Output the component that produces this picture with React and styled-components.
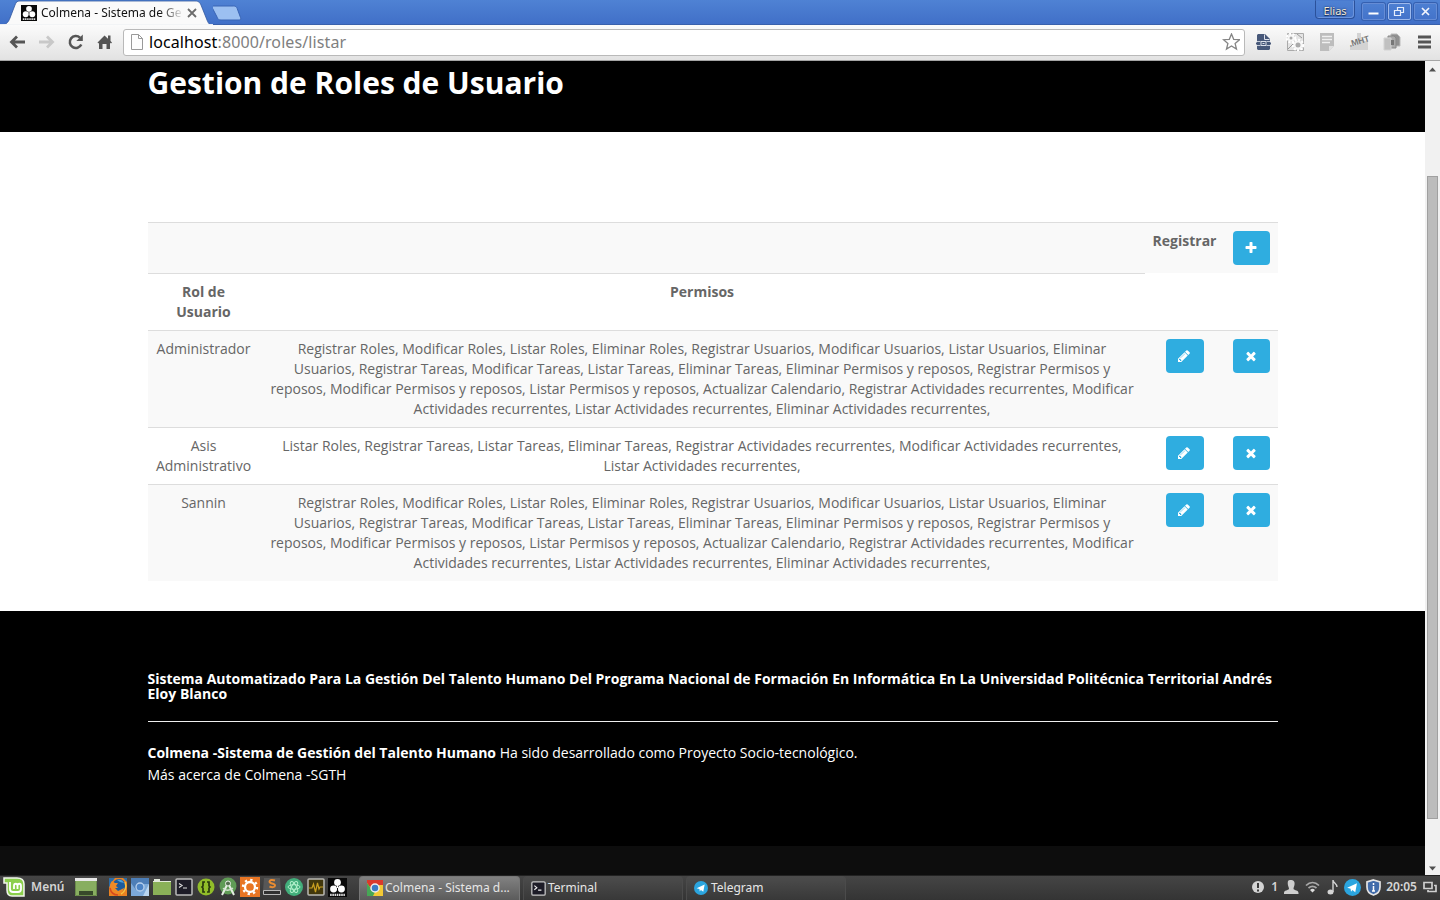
import React from "react";
import styled, { createGlobalStyle, css } from "styled-components";

const GlobalStyle = createGlobalStyle`
  * { box-sizing: border-box; }
  html, body { margin: 0; padding: 0; overflow: hidden; background: #fff; }
  svg { display: block; flex: none; }
`;

const Desktop = styled.div`
  width: 1440px;
  height: 900px;
  display: flex;
  flex-direction: column;
  overflow: hidden;
  font-family: "Noto Sans", sans-serif;
`;

/* ---------- browser frame ---------- */
const TabStrip = styled.div`
  height: 25px;
  flex: none;
  display: flex;
  background: linear-gradient(#4f82d4, #4170c8 94%, #35599d);
`;
const Tab = styled.div`
  width: 213px;
  height: 25px;
  display: flex;
  position: relative;
  padding: 5px 0 0 21px;
`;
const TabShape = styled.svg`
  position: absolute;
  left: 0;
  top: 0;
`;
const TabTitle = styled.span`
  position: relative;
  width: 141px;
  margin-left: 4px;
  font-size: 12px;
  line-height: 16px;
  white-space: nowrap;
  color: #111;
  mask-image: linear-gradient(90deg, #000 119px, transparent 143px);
`;
const Lift = styled.span`
  position: relative;
  display: block;
`;
const WindowControls = styled.div`
  margin-left: auto;
  display: flex;
  padding-right: 3px;
`;
const Profile = styled.div`
  width: 40px;
  height: 19px;
  margin-right: 4px;
  border: 1px solid #2b519b;
  border-top-color: #4a7bd0;
  border-radius: 0 0 4px 4px;
  box-shadow: inset -1px -1px 0 #6c94dc;
  color: #f3ead8;
  text-shadow: 0 0 2px #14274e, 0 1px 1px #14274e;
  font-size: 11px;
  line-height: 19px;
  text-align: center;
`;
const WinButton = styled.div`
  width: 23px;
  height: 17px;
  margin: 3px 0 0 3px;
  border: 1px solid ${(p) => (p.$bright ? "#9db9ec" : "#658cd5")};
  border-radius: 2px;
  box-shadow: 0 0 0 1px #3560b0;
  display: flex;
  align-items: center;
  justify-content: center;
`;
const Toolbar = styled.div`
  height: 36px;
  flex: none;
  display: flex;
  align-items: center;
  background: linear-gradient(#fbfbfb, #e2e2e2);
  border-bottom: 1px solid #a5a5a5;
  padding: 0 6px 1px 8px;
`;
const NavIcons = styled.div`
  display: flex;
  gap: 9px;
  width: 115px;
`;
const Address = styled.div`
  width: 1122px;
  height: 27px;
  display: flex;
  align-items: center;
  background: #fff;
  border: 1px solid #b9b9b9;
  border-radius: 3px;
  padding: 0 4px 0 6px;
`;
const Url = styled.span`
  flex: 1;
  margin-left: 4px;
  font-size: 16px;
  letter-spacing: 0.1px;
  line-height: 22px;
  color: #808080;
  b { font-weight: 400; color: #000; }
`;
const Extensions = styled.div`
  display: flex;
  align-items: center;
  gap: 12.3px;
  margin-left: auto;
`;

/* ---------- web page ---------- */
const Viewport = styled.div`
  height: 814px;
  flex: none;
  display: flex;
`;
const Page = styled.div`
  width: 1425px;
  font-family: "Open Sans", sans-serif;
  font-size: 14px;
  line-height: 20px;
  color: #666;
  background: #fff;
`;
const Banner = styled.header`
  height: 71px;
  background: #000;
  padding: 5px 147.5px 0;
`;
const Title = styled.h1`
  margin: 0;
  font-size: 30px;
  line-height: 33px;
  font-weight: 700;
  color: #fff;
`;
const Content = styled.main`
  padding: 90px 147.5px 30px;
`;
const Table = styled.table`
  width: 1130px;
  table-layout: fixed;
  border-collapse: collapse;
  border-spacing: 0;
`;
const Row = styled.tr`
  background: ${(p) => (p.$striped ? "#f9f9f9" : "#fff")};
`;
const cell = css`
  padding: 8px;
  vertical-align: top;
  text-align: center;
  border-top: 1px solid #ddd;
`;
const Cell = styled.td`${cell}`;
const HeadCell = styled.th`
  ${cell}
  font-weight: 700;
`;
const ActionButton = styled.button`
  display: block;
  width: ${(p) => (p.$wide ? 38 : 37)}px;
  height: 34px;
  margin: 0 auto;
  padding: 10px 11px;
  border: 0;
  border-radius: 4px;
  background: #2fade0;
`;
const Footer = styled.footer`
  height: 235px;
  background: #000;
  color: #fff;
  padding: 60px 147.5px 0;
`;
const FooterTitle = styled.h5`
  margin: 0;
  font-size: 14px;
  line-height: 15px;
  font-weight: 700;
`;
const Rule = styled.hr`
  margin: 20px 0;
  border: 0;
  border-top: 1px solid #eee;
`;
const FooterText = styled.p`
  margin: 0;
  line-height: 22px;
`;
const BottomStrip = styled.div`
  height: 29px;
  background: #0d0d0d;
`;
const Scrollbar = styled.div`
  width: 15px;
  display: flex;
  flex-direction: column;
  align-items: center;
  background: #f1f1f1;
  padding: 6px 0 4px;
`;
const Thumb = styled.div`
  width: 11px;
  height: 643px;
  margin: 104px 0 auto;
  background: #bcbcbc;
  border: 1px solid #a0a0a0;
`;

/* ---------- desktop panel ---------- */
const Panel = styled.div`
  height: 25px;
  flex: none;
  display: flex;
  align-items: center;
  background: linear-gradient(#454545, #343434);
  border-top: 1px solid #222;
  color: #e6e6e6;
  font-size: 12px;
  line-height: 16px;
  padding: 0 3px 2px 3px;
`;
const MenuLabel = styled.b`
  margin-left: 6px;
  width: 44px;
  font-weight: 600;
  color: #d4d4d4;
`;
const Launchers = styled.div`
  display: flex;
  align-items: center;
  gap: 2px;
  margin-left: 11px;
  width: 251px;
`;
const Task = styled.div`
  width: ${(p) => p.$width}px;
  align-self: stretch;
  margin: 0 3px -2px 0;
  padding: 0 0 1px 7px;
  display: flex;
  align-items: center;
  gap: ${(p) => p.$gap || 2}px;
  white-space: nowrap;
  border: 1px solid ${(p) => (p.$active ? "#777" : "#4b4b4b")};
  border-bottom: 0;
  border-radius: 4px 4px 0 0;
  background: ${(p) => (p.$active ? "linear-gradient(#818181, #5b5b5b)" : "linear-gradient(#4c4c4c, #383838)")};
`;
const Tray = styled.div`
  margin-left: auto;
  display: flex;
  align-items: center;
  color: #d6d6d6;
  font-weight: 600;
`;
const TrayItem = styled.span`
  margin-left: ${(p) => p.$gap}px;
`;

function Icon({ w = 18, h = w, box, children }) {
  return (
    <svg width={w} height={h} viewBox={box || `0 0 ${w} ${h}`} fill="none">
      {children}
    </svg>
  );
}

const GLYPHS = {
  plus: "M1600 736v192q0 40-28 68t-68 28h-416v416q0 40-28 68t-68 28h-192q-40 0-68-28t-28-68v-416h-416q-40 0-68-28t-28-68v-192q0-40 28-68t68-28h416v-416q0-40 28-68t68-28h192q40 0 68 28t28 68v416h416q40 0 68 28t28 68z",
  times: "M1490 1322q0 40-28 68l-136 136q-28 28-68 28t-68-28l-294-294-294 294q-28 28-68 28t-68-28l-136-136q-28-28-28-68t28-68l294-294-294-294q-28-28-28-68t28-68l136-136q28-28 68-28t68 28l294 294 294-294q28-28 68-28t68 28l136 136q28 28 28 68t-28 68l-294 294 294 294q28 28 28 68z",
  pencil: "M491 1536l91-91-235-235-91 91v107h128v128h107zm523-928q0-22-22-22-10 0-17 7l-542 542q-7 7-7 17 0 22 22 22 10 0 17-7l542-542q7-7 7-17zm-54-192l416 416-832 832h-416v-416zm683 96q0 53-37 90l-166 166-416-416 166-165q36-38 90-38 53 0 91 38l235 234q37 39 37 91z",
};

function Action({ glyph, wide }) {
  return (
    <ActionButton $wide={wide} aria-label={glyph}>
      <Icon w={14} box="0 0 1792 1792">
        <path fill="#fff" d={GLYPHS[glyph]} />
      </Icon>
    </ActionButton>
  );
}

function ColmenaIcon({ size }) {
  return (
    <Icon w={size} box="0 0 18 18">
      <path fill="#090909" d="M0 0h18v18H0z" />
      <g fill="#fff">
        <circle cx="9" cy="4.200" r="3.200" />
        <circle cx="5.300" cy="10.400" r="3.300" />
        <circle cx="12.700" cy="10.400" r="3.300" />
      </g>
      <path d="M9 6.500v3" stroke="#fff" />
      <path d="M2 16h14" stroke="#ddd" strokeWidth="2" strokeDasharray="1.5 .6" />
    </Icon>
  );
}

const TerminalIcon = ({ size = 18 }) => (
  <Icon w={size} box="0 0 18 18">
    <rect x="1" y="1" width="16" height="16" rx="1.5" fill="#1d1c27" stroke="#c9c9c9" strokeWidth="1.5" />
    <path d="M4 5.500l3 2.500-3 2.500M8.500 11h4" stroke="#eee" strokeWidth="1.400" />
  </Icon>
);

const TelegramIcon = ({ size }) => (
  <Icon w={size} box="0 0 16 16">
    <circle cx="8" cy="8" r="8" fill="#2ba5df" />
    <path d="M3 8.300L12.200 4l-1.600 8.400-2.700-2-1.300 1.700-.4-3z" fill="#fff" />
  </Icon>
);

function BrowserTop() {
  return (
    <>
      <TabStrip>
        <Tab>
          <TabShape width="213" height="25">
            <path d="M0 25C6 25 8 23 10 18l5-13c1.200-3 2-4 5-4h175c4 0 5 2 6 4l6 15c1.500 4 3 5 6 5z" fill="#fafafa" stroke="#31589f" strokeWidth=".8" />
            <path d="M0 24.600h213" stroke="#fafafa" />
          </TabShape>
          <Lift><ColmenaIcon size={16} /></Lift>
          <TabTitle>Colmena - Sistema de Ge</TabTitle>
          <Lift>
            <Icon w={18} h={16}>
              <path d="M6 4l8 8M14 4l-8 8" stroke="#6c6c6c" strokeWidth="1.800" />
            </Icon>
          </Lift>
        </Tab>
        <Icon w={30} h={25} box="213 0 30 25">
          <path d="M209 6h22.500c2 0 3 .5 3.700 2.500l3.300 9c.6 1.800 0 2.500-1.500 2.500h-18c-2 0-3-.6-3.700-2.500L209.300 6z" transform="translate(2)" fill="#9cc0f1" stroke="#3964b4" />
        </Icon>
        <WindowControls>
          <Profile>Elias</Profile>
          <WinButton>
            <Icon w={13} h={11}><path d="M1.500 7.500h10" stroke="#fff" strokeWidth="2" /></Icon>
          </WinButton>
          <WinButton $bright>
            <Icon w={13} h={11}>
              <path d="M4.500 4V1.500h6v5H8M1.500 4.500h6v5h-6z" stroke="#e6eefc" strokeWidth="1.200" />
            </Icon>
          </WinButton>
          <WinButton>
            <Icon w={13} h={11}><path d="M3 2l7 7M10 2L3 9" stroke="#f2f5fd" strokeWidth="1.700" /></Icon>
          </WinButton>
        </WindowControls>
      </TabStrip>
      <Toolbar>
        <NavIcons>
          <Icon w={20}><path d="M17 10H4M9 4.500L3.500 10 9 15.500" stroke="#555" strokeWidth="2.800" /></Icon>
          <Icon w={20}><path d="M2 10h13M10 4.500l5.500 5.500-5.500 5.500" stroke="#c8c8c8" strokeWidth="2.800" /></Icon>
          <Icon w={20}>
            <path d="M15.300 12.500A6 6 0 1 1 14 5.700" stroke="#555" strokeWidth="2.500" />
            <path d="M16.800 2.500V9h-6.500z" fill="#555" />
          </Icon>
          <Icon w={20}>
            <path d="M2.500 10.500L9.500 3.500l3.500 3.300V3.500h2.500v5.600l1.500 1.400-1 1-1-.8V17h-3.500v-5h-4v5H4v-6.300l-.7.800z" fill="#555" />
          </Icon>
        </NavIcons>
        <Address>
          <Icon w={15} h={18}>
            <path d="M1.500 1.500h7l4 4v11h-11zM8.500 1.500v4h4" stroke="#999" fill="#fdfdfd" />
          </Icon>
          <Url><b>localhost</b>:8000/roles/listar</Url>
          <Icon w={18}>
            <path d="M9.500 1l2.200 5.300 5.800.4-4.400 3.800 1.400 5.600L9.500 13l-5 3.100 1.400-5.600L1.500 6.700l5.800-.4z" fill="#fff" stroke="#858585" strokeWidth="1.300" />
          </Icon>
        </Address>
        <Extensions>
          <Icon w={20} h={18} box="-3 0 20 18">
            <path d="M1 2l1-1h7l5 5v10l-1 1H2l-1-1z" fill="#475879" />
            <path d="M8.500 1.500v5h5" stroke="#dde1ea" />
            <path d="M1 8.500h3.500M10.500 8.500H14M1 12.500h3.500M10.500 12.500H14" stroke="#c3cad8" />
            <path d="M0 10.500h15" stroke="#475879" strokeWidth="2" />
            <path d="M5 8.500h5v4H5z" fill="#475879" stroke="#dde1ea" />
            <path d="M6.500 10.500h2" stroke="#dde1ea" />
          </Icon>
          <Icon w={20}>
            <path d="M2.500 1.500h16v17h-16z" fill="#e4e4e4" stroke="#aaa" />
            <g stroke="#fff" strokeWidth="2.500" strokeDasharray="2 1.300">
              <circle cx="6" cy="6" r="4" fill="#ccc" />
              <circle cx="13" cy="13" r="5" fill="#ccc" />
            </g>
            <path d="M3 17l5-5M12 2l5 4" stroke="#999" />
            <circle cx="13" cy="13" r="3.500" stroke="#f7f7f7" strokeWidth="2" fill="#aaa" />
            <circle cx="6" cy="6" r="2.500" stroke="#f7f7f7" strokeWidth="2" fill="#aaa" />
          </Icon>
          <Icon w={20}>
            <path d="M3 1h14v13l-5 5H3z" fill="#bdbdbd" />
            <path d="M5 4.500h10M5 7.500h10M5 10.500h8" stroke="#f0f0f0" strokeWidth="1.500" />
            <path d="M12 19v-5h5z" fill="#e1e1e1" />
          </Icon>
          <Icon w={20}>
            <path d="M8 1h4v8h7v9H1v-5h7z" fill="#d3d3d3" />
            <text x="1" y="15" transform="rotate(-17 1 15)" fill="#777" fontSize="8.500" fontWeight="700" fontFamily="Liberation Sans, sans-serif">.MHT</text>
          </Icon>
          <Icon w={20}>
            <path d="M9 2h6l3 3v9H9z" fill="#909090" stroke="#bbb" />
            <path d="M6 4h6l2 2v10H6z" fill="#aaa" stroke="#888" />
            <path d="M2 6h7v12H2z" fill="#c0c0c0" stroke="#d3d3d3" />
            <path d="M9 8h3v5H9z" fill="#777" />
          </Icon>
          <Icon w={20}><path d="M4 5h13M4 10h13M4 15h13" stroke="#555" strokeWidth="2.800" /></Icon>
        </Extensions>
      </Toolbar>
    </>
  );
}

const FULL =
  "Registrar Roles, Modificar Roles, Listar Roles, Eliminar Roles, Registrar Usuarios, Modificar Usuarios, Listar Usuarios, Eliminar Usuarios, Registrar Tareas, Modificar Tareas, Listar Tareas, Eliminar Tareas, Eliminar Permisos y reposos, Registrar Permisos y reposos, Modificar Permisos y reposos, Listar Permisos y reposos, Actualizar Calendario, Registrar Actividades recurrentes, Modificar Actividades recurrentes, Listar Actividades recurrentes, Eliminar Actividades recurrentes,";

const ROLES = [
  { name: "Administrador", permissions: FULL },
  {
    name: "Asis Administrativo",
    permissions:
      "Listar Roles, Registrar Tareas, Listar Tareas, Eliminar Tareas, Registrar Actividades recurrentes, Modificar Actividades recurrentes, Listar Actividades recurrentes,",
  },
  { name: "Sannin", permissions: FULL },
];

function RolesPage() {
  return (
    <Page>
      <Banner><Title>Gestion de Roles de Usuario</Title></Banner>
      <Content>
        <Table>
          <colgroup>
            <col style={{ width: 112 }} />
            <col style={{ width: 885 }} />
            <col style={{ width: 80 }} />
            <col style={{ width: 53 }} />
          </colgroup>
          <tbody>
            <Row $striped>
              <HeadCell colSpan={2} />
              <HeadCell>Registrar</HeadCell>
              <HeadCell><Action glyph="plus" /></HeadCell>
            </Row>
            <Row>
              <HeadCell>Rol de Usuario</HeadCell>
              <HeadCell>Permisos</HeadCell>
            </Row>
            {ROLES.map((role, i) => (
              <Row key={role.name} $striped={i % 2 === 0}>
                <Cell>{role.name}</Cell>
                <Cell>{role.permissions}</Cell>
                <Cell><Action glyph="pencil" wide /></Cell>
                <Cell><Action glyph="times" /></Cell>
              </Row>
            ))}
          </tbody>
        </Table>
      </Content>
      <Footer>
        <FooterTitle>
          Sistema Automatizado Para La Gestión Del Talento Humano Del Programa Nacional de Formación En Informática En La Universidad Politécnica Territorial Andrés Eloy Blanco
        </FooterTitle>
        <Rule />
        <FooterText>
          <b>Colmena -Sistema de Gestión del Talento Humano</b> Ha sido desarrollado como Proyecto Socio-tecnológico.
        </FooterText>
        <FooterText>Más acerca de Colmena -SGTH</FooterText>
      </Footer>
      <BottomStrip />
    </Page>
  );
}

function DesktopPanel() {
  return (
    <Panel>
      <Icon w={22} h={20}>
        <path d="M1 1h13c4 0 7 2 7 6v12H9c-4 0-5-3-5-6V6H1z" fill="#8bcf4c" stroke="#f2f6ed" strokeWidth="1.500" />
        <path d="M7 5v7c0 2 1 3 3 3h5c2 0 3-1 3-3V9c0-3-3.500-3-3.500 0v3M14.500 9c0-3-3.500-3-3.500 0v3" stroke="#fff" strokeWidth="1.800" />
      </Icon>
      <MenuLabel>Menú</MenuLabel>
      <Icon w={22} h={18}>
        <path d="M0 1h22v17H0z" fill="#88ae60" />
        <path d="M0 0h22v3H0z" fill="#e7e7e7" />
        <path d="M4 13h14v5H4z" fill="#374a2a" />
        <path d="M.5 3v14.500h21V3" stroke="#6b8c4b" />
      </Icon>
      <Launchers>
        <Icon w={20} h={18}>
          <path d="M1 0h18v18H1z" fill="#e98222" />
          <path d="M1 0h6L3 5 1 10zM15 0h4v4z" fill="#2b6ca8" />
          <circle cx="11" cy="7.500" r="6.500" fill="#1c5b9c" />
          <path d="M9 2c3-1 6 0 7 3l-4-1z" fill="#4fa3d8" />
          <path d="M4 3l3 2 3 0-2 3 2 2-3 0 3 3 6-3c-1 5-5 7-9 6-5-1-7-8-3-13z" fill="#ee8a26" />
          <path d="M2 10c1 5 4 7 8 7" stroke="#d64a1e" strokeWidth="1.500" />
          <path d="M17 4c2 5 0 10-4 12" stroke="#f6c341" strokeWidth="1.500" />
        </Icon>
        <Icon w={20} h={18}>
          <path d="M1 0h18v18H1z" fill="#7ca9d8" />
          <path d="M1 0h18v6H10L6 12 1 5z" fill="#4d7eb7" />
          <path d="M19 6l-6 12h6z" fill="#b9d5ef" />
          <circle cx="10" cy="9" r="4" fill="#4b83c5" stroke="#b8d0ec" strokeWidth="1.300" />
        </Icon>
        <Icon w={20} h={18}>
          <path d="M1 3h18v14H1z" fill="#8ab158" />
          <path d="M2 1h6v2H2zM1 3h18v1H1z" fill="#e3eadb" />
        </Icon>
        <Icon w={20} h={18}>
          <rect x="2" y="1" width="16" height="16" rx="1" fill="#1d1c27" stroke="#bbb" strokeWidth="1.500" />
          <path d="M5 5.500l3 2-3 2M9 10h4" stroke="#ddd" strokeWidth="1.200" />
        </Icon>
        <Icon w={20} h={18}>
          <circle cx="10" cy="9" r="8.500" fill="#91bd29" />
          <path d="M9 4H7v4L6 9l1 1v4h2M11 4h2v4l1 1-1 1v4h-2" stroke="#27370d" strokeWidth="1.700" />
        </Icon>
        <Icon w={20} h={20}>
          <circle cx="10" cy="9" r="8.500" fill="#5f9b55" />
          <path d="M9 8L4 18M11 8l5 10" stroke="#e5eee2" strokeWidth="2" />
          <path d="M5 11c2 3 7 3 10 0" stroke="#d5e2d2" strokeWidth="1.300" />
          <circle cx="10" cy="6.500" r="2.500" fill="#55704f" stroke="#ecf2ea" />
        </Icon>
        <Icon w={20} h={20}>
          <path d="M0 0h20v20H0z" fill="#e87524" />
          <circle cx="10" cy="10" r="5" stroke="#fff" strokeWidth="2.300" />
          <circle cx="10" cy="10" r="7" stroke="#fff" strokeWidth="2.400" strokeDasharray="2.300 3.198" />
        </Icon>
        <Icon w={20} h={18}>
          <path d="M2 0h16l1 13H1z" fill="#575757" />
          <path d="M1.500 12.500h17v4h-17z" fill="#303030" stroke="#b8b8b8" />
          <path d="M13 2.500c-3-1-5.500-.5-5.500 1.300 0 2.200 5.500 1 5.500 3.700 0 2-3 2-5.500 1" stroke="#e98c32" strokeWidth="2" />
        </Icon>
        <Icon w={20} h={18}>
          <circle cx="10" cy="9" r="9" fill="#42ae7b" />
          <g stroke="#b2f0cb">
            <ellipse cx="10" cy="9" rx="6" ry="2.300" />
            <ellipse cx="10" cy="9" rx="6" ry="2.300" transform="rotate(60 10 9)" />
            <ellipse cx="10" cy="9" rx="6" ry="2.300" transform="rotate(120 10 9)" />
          </g>
        </Icon>
        <Icon w={20} h={18}>
          <rect x="2" y="1" width="16" height="16" rx="1" fill="#41370c" stroke="#b9b9b4" strokeWidth="1.500" />
          <path d="M3 10h3l1.500-4 2 8 2-9 1.500 6 1-2h3" stroke="#c99f20" strokeWidth="1.200" />
        </Icon>
        <ColmenaIcon size={19} />
      </Launchers>
      <Task $active $width={161}>
        <Icon w={16}>
          <path d="M0 0h16v16H0z" fill="#f3c935" />
          <path d="M0 0h16v5H8L5 10 0 3z" fill="#da392d" />
          <path d="M0 3l5 7 3 2-2 4H0z" fill="#46a755" />
          <circle cx="8" cy="8" r="4" fill="#3c7bc5" stroke="#eee" strokeWidth="1.500" />
        </Icon>
        <span>Colmena - Sistema d...</span>
      </Task>
      <Task $width={160}><TerminalIcon size={15} /><span>Terminal</span></Task>
      <Task $width={160} $gap={3}><TelegramIcon size={14} /><span>Telegram</span></Task>
      <Tray>
        <Icon w={12} h={14}><circle cx="6" cy="7" r="6" fill="#d4d4d4" /><path d="M6 3v5M6 9.500v2" stroke="#3b3b3b" strokeWidth="2" /></Icon>
        <TrayItem $gap={7}>1</TrayItem>
        <TrayItem $gap={6}>
          <Icon w={15} h={14}><path d="M4 1c2-2 6-1 6.500 1.500C11 6 9.500 7 9.500 9c1 1.500 5 1 5 4v1H0v-1c0-3 4-2.500 5-4 0-2-2-4-1-8z" fill="#cecece" /></Icon>
        </TrayItem>
        <TrayItem $gap={6}>
          <Icon w={15} h={14}>
            <path d="M1 5.500c4-4 9-4 13 0M3.500 8c3-2.500 5-2.500 8 0" stroke="#aaa" strokeWidth="1.700" />
            <path d="M5 10c2-1.600 3-1.600 5 0l-2.500 2.500z" fill="#ddd" />
          </Icon>
        </TrayItem>
        <TrayItem $gap={7}>
          <Icon w={12} h={16}><ellipse cx="3.500" cy="13" rx="3" ry="2.500" fill="#d4d4d4" /><path d="M6 13V1c0 3 4 3 4 7" stroke="#d4d4d4" strokeWidth="1.400" /></Icon>
        </TrayItem>
        <TrayItem $gap={5}><TelegramIcon size={17} /></TrayItem>
        <TrayItem $gap={5}>
          <Icon w={15} h={17}>
            <path d="M7.500 1L14 3v5c0 4-3 7-6.500 8C4 15 1 12 1 8V3z" fill="#426caa" stroke="#e4e4e4" strokeWidth="1.700" />
            <path d="M7.500 4v2M7.500 7v5M6 12h3" stroke="#fff" strokeWidth="1.500" />
          </Icon>
        </TrayItem>
        <TrayItem $gap={5}>20:05</TrayItem>
        <TrayItem $gap={6}>
          <Icon w={14} h={13}><path d="M1 1.500h8v6H1zM11 4.500h2v6H5V9" stroke="#cfcfcf" strokeWidth="1.700" /></Icon>
        </TrayItem>
      </Tray>
    </Panel>
  );
}

export default function App() {
  return (
    <Desktop>
      <GlobalStyle />
      <BrowserTop />
      <Viewport>
        <RolesPage />
        <Scrollbar>
          <Icon w={7} h={5}><path d="M0 4.500h7L3.500.5z" fill="#505050" /></Icon>
          <Thumb />
          <Icon w={7} h={5}><path d="M0 .5h7L3.500 4.500z" fill="#505050" /></Icon>
        </Scrollbar>
      </Viewport>
      <DesktopPanel />
    </Desktop>
  );
}
